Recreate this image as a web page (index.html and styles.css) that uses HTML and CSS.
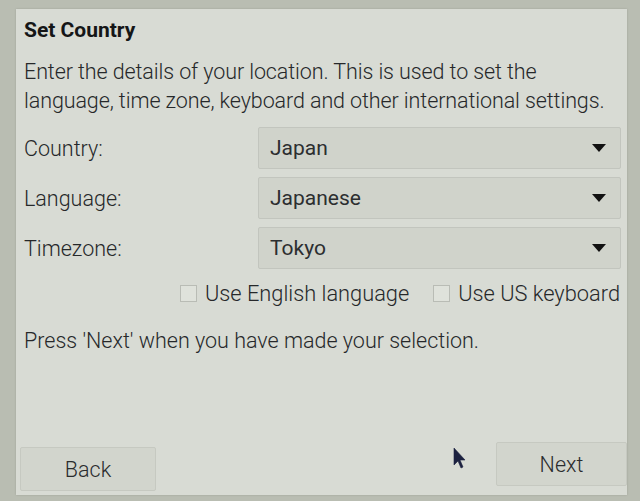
FILE: index.html
```html
<!DOCTYPE html>
<html>
<head>
<meta charset="utf-8">
<link rel="stylesheet" href="styles.css">
</head>
<body>
<div class="dialog">
  <div class="title">Set Country</div>
  <p class="intro">Enter the details of your location. This is used to set the language, time zone, keyboard and other international settings.</p>
  <div class="form">
    <label class="lbl">Country:</label>
    <div class="combo"><span>Japan</span><span class="arrow"></span></div>
    <label class="lbl">Language:</label>
    <div class="combo"><span>Japanese</span><span class="arrow"></span></div>
    <label class="lbl">Timezone:</label>
    <div class="combo"><span>Tokyo</span><span class="arrow"></span></div>
  </div>
  <div class="checks">
    <label class="check"><span class="box"></span>Use English language</label>
    <label class="check"><span class="box"></span>Use US keyboard</label>
  </div>
  <p class="note">Press 'Next' when you have made your selection.</p>
  <div class="spacer"></div>
  <div class="buttons">
    <button class="btn back">Back</button>
    <button class="btn next">Next</button>
  </div>
  <svg class="cursor" width="14" height="24" viewBox="0 0 14 24"><path d="M1 1 L1 18 L5 14 L8 21 L10 20 L7 13 L12 13 Z" fill="#1c2240" stroke="#1c2240" stroke-width="0.6"/></svg>
</div>
</body>
</html>
```
FILE: styles.css
```css
html, body {
  margin: 0;
  height: 100%;
}
body {
  background: #b9bdb2;
  padding: 9px 13px 6px 16px;
  box-sizing: border-box;
  font-family: Roboto, "Liberation Sans", sans-serif;
  color: #26282a;
}
.dialog {
  position: relative;
  height: 100%;
  box-sizing: border-box;
  background: #d8dbd4;
  padding: 9px 6px 4px 8px;
  display: flex;
  flex-direction: column;
  box-shadow: 0 0 2px rgba(0,0,0,0.15);
}
.title {
  font-weight: 700;
  font-size: 21px;
  line-height: 24px;
  color: #151617;
}
.intro {
  margin: 15px 0 0;
  font-size: 21.5px;
  font-weight: 300;
  line-height: 29px;
  letter-spacing: -0.1px;
}
.form {
  margin-top: 12px;
  display: grid;
  grid-template-columns: 234px 1fr;
  row-gap: 8px;
  align-items: center;
}
.lbl {
  font-size: 21.5px;
  font-weight: 300;
}
.combo {
  height: 42px;
  box-sizing: border-box;
  border: 1px solid #c2c5be;
  background: #d0d3cb;
  border-radius: 2px;
  display: flex;
  align-items: center;
  justify-content: space-between;
  padding: 0 14px 0 11px;
  font-size: 21px;
  font-weight: 400;
  color: #2c2e30;
}
.arrow {
  width: 0;
  height: 0;
  border-left: 7px solid transparent;
  border-right: 7px solid transparent;
  border-top: 8px solid #111;
}
.checks {
  margin-top: 12px;
  display: flex;
  justify-content: flex-end;
  gap: 24px;
  padding-right: 1px;
  font-size: 21.8px;
  font-weight: 300;
}
.check {
  display: flex;
  align-items: center;
  gap: 8px;
}
.box {
  width: 17px;
  height: 17px;
  box-sizing: border-box;
  border: 1px solid #b9bcb5;
  background: #dfe2db;
}
.note {
  margin: 22px 0 0;
  font-size: 21.5px;
  font-weight: 300;
}
.spacer { flex: 1; }
.buttons {
  display: flex;
  justify-content: space-between;
  align-items: flex-end;
}
.btn {
  font-family: Roboto, "Liberation Sans", sans-serif;
  font-size: 21.5px;
  font-weight: 300;
  color: #2a2c2e;
  background: #d2d5cd;
  border: 1px solid #c6c9c1;
  border-radius: 2px;
  height: 44px;
}
.back {
  width: 136px;
  margin-left: -4px;
}
.next {
  width: 131px;
  margin-bottom: 5px;
  margin-right: -6px;
}
.cursor {
  position: absolute;
  left: 437px;
  top: 438px;
}
```
